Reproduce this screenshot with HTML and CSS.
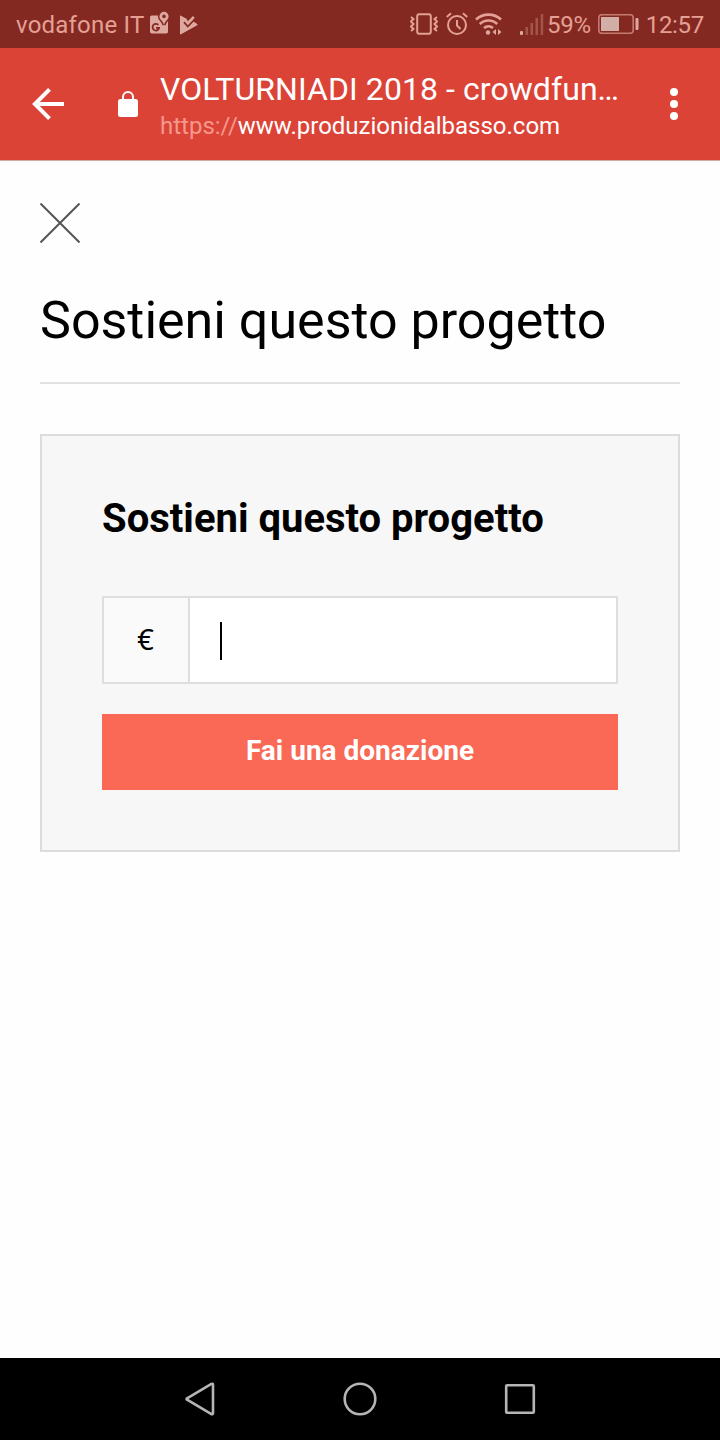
FILE: index.html
```html
<!DOCTYPE html>
<html lang="it">
<head>
  <meta charset="UTF-8">
  <meta name="viewport" content="width=device-width, initial-scale=1.0">
  <title>VOLTURNIADI 2018 - crowdfunding</title>
  <link rel="stylesheet" href="styles.css">
</head>
<body>
  <!-- Barra di stato -->
  <div class="status-bar">
    <div class="status-left">
      <span class="operator">vodafone IT</span>
      <svg class="icon-maps" width="20" height="24" viewBox="0 0 20 24">
        <rect class="fill" x="0" y="4.500" width="18" height="18" rx="1.800"/>
        <path class="pin" d="M14 .8a4.600 4.600 0 0 1 4.600 4.600c0 3.200-3.600 4.200-4.600 8.600-1-4.400-4.600-5.400-4.600-8.600A4.600 4.600 0 0 1 14 .8z"/>
        <circle class="hole" cx="14" cy="5.400" r="1.800"/>
        <path class="cut" d="M8.300 14a3.300 3.300 0 1 0 .8 2.800H6"/>
      </svg>
      <svg class="icon-play" width="20" height="20" viewBox="0 0 20 20">
        <path class="fill" d="M1.500.5L7.500 3.800l1.300 2.400L14 1l1.500 1.700-1.700 3.300 4.400 3q.8.600 0 1.200L2 19.300q-1 .4-1-.6V1q0-.8.500-.5z"/>
        <path class="cut" d="M5 7.200l3.800 4.300L15.500 4.500"/>
      </svg>
    </div>
    <div class="status-right">
      <svg class="icon-vibrate" width="28" height="22" viewBox="0 0 28 22">
        <rect class="line" x="7.200" y="1.200" width="13.600" height="19.600" rx="2"/>
        <path class="line" d="M1 4l2.500 2L1 8.500 3.500 11 1 13.500 3.500 16 1 18M27 4l-2.500 2L27 8.500 24.500 11l2.500 2.500-2.500 2.500 2.500 2"/>
      </svg>
      <svg class="icon-alarm" width="22" height="24" viewBox="0 0 22 24">
        <circle class="line" cx="11" cy="13" r="9"/>
        <path class="line" d="M11 8v5.500l3.500 3.500M.8 5L5 1.300M21.200 5L17 1.300"/>
      </svg>
      <svg class="icon-wifi" width="28" height="24" viewBox="0 0 28 24">
        <path class="line thick" d="M1 7.500a18.500 18.500 0 0 1 25 0M4.800 12a12.500 12.500 0 0 1 17.400 0M9 16a7 7 0 0 1 9 0"/>
        <circle class="fill" cx="13" cy="20.500" r="2.200"/>
        <path class="fill" d="M21 17v6l-3.500-3zM23 17l3.500 3-3.500 3z"/>
      </svg>
      <svg class="icon-signal" width="24" height="23" viewBox="0 0 24 23">
        <rect class="fill" x="0" y="18" width="3" height="4" rx="1"/>
        <path class="fill dim" d="M5.500 14h2.500v8H5.500zM10.500 10H13v12h-2.500zM15.500 5H18v17h-2.500zM20.700 1h2.500v21h-2.500z"/>
      </svg>
      <span class="battery-text">59%</span>
      <svg class="icon-battery" width="41" height="20" viewBox="0 0 41 20">
        <rect class="battery-frame" x=".8" y=".8" width="34.400" height="18.400" rx="3"/>
        <rect class="battery-level" x="3" y="3" width="18" height="14"/>
        <rect class="fill" x="37.500" y="4" width="3" height="12" rx="1"/>
      </svg>
      <span class="clock">12:57</span>
    </div>
  </div>

  <!-- Barra del browser -->
  <header class="toolbar">
    <svg class="icon-back" width="32" height="32" viewBox="0 0 32 32">
      <path d="M32 16H3M17.500 1.400L2.900 16l14.600 14.600"/>
    </svg>
    <svg class="icon-lock" width="20" height="27" viewBox="0 0 20 27">
      <rect x="0" y="8" width="20" height="18" rx="2.500"/>
      <path d="M5 9V6a5 5 0 0 1 10 0v3"/>
    </svg>
    <div class="page-info">
      <div class="page-title">VOLTURNIADI 2018 - crowdfun…</div>
      <div class="page-url"><span>https://</span>www.produzionidalbasso.com</div>
    </div>
    <svg class="icon-menu" width="8" height="32" viewBox="0 0 8 32">
      <circle cx="4" cy="4" r="4"/>
      <circle cx="4" cy="16" r="4"/>
      <circle cx="4" cy="28" r="4"/>
    </svg>
  </header>

  <!-- Contenuto -->
  <main class="content">
    <svg class="icon-close" width="40" height="40" viewBox="0 0 40 40">
      <path d="M.5.5l39 39M39.500.5l-39 39"/>
    </svg>
    <h1>Sostieni questo progetto</h1>
    <section class="box">
      <h2>Sostieni questo progetto</h2>
      <div class="amount">
        <span class="currency">€</span>
        <div class="field"><span class="caret"></span></div>
      </div>
      <button class="btn">Fai una donazione</button>
    </section>
  </main>

  <!-- Barra di navigazione -->
  <nav class="nav-bar">
    <svg width="34" height="34" viewBox="0 0 34 34">
      <path d="M28 2.200Q30 1 30 3v28q0 2-2 .8L4.500 18q-2-1 0-2z"/>
    </svg>
    <svg width="34" height="34" viewBox="0 0 34 34">
      <circle cx="17" cy="17" r="15.300"/>
    </svg>
    <svg width="34" height="34" viewBox="0 0 34 34">
      <rect x="3.200" y="3.200" width="27.600" height="27.600" rx="1"/>
    </svg>
  </nav>
</body>
</html>
```
FILE: styles.css
```css
* {
  margin: 0;
  padding: 0;
  box-sizing: border-box;
}
body {
  font-family: Roboto, sans-serif;
  background: #fefefe;
  color: #000;
  display: flex;
  flex-direction: column;
  height: 1440px;
}
svg {
  display: block;
  flex: none;
}

/* === BARRA DI STATO === */
.status-bar {
  display: flex;
  justify-content: space-between;
  height: 48px;
  padding: 0 16px;
  background: #842921;
  color: #e5a095;
  font-size: 24px;
  line-height: 46px;
  white-space: nowrap;
}
.status-left,
.status-right {
  display: flex;
  align-items: center;
  height: 48px;
}
.status-bar span {
  padding-top: 2px;
}
.operator {
  letter-spacing: 0.2px;
}
.battery-text,
.clock {
  letter-spacing: -0.3px;
}
.status-bar .fill {
  fill: #dda99e;
}
.status-bar .line {
  fill: none;
  stroke: #e5a095;
  stroke-width: 2;
}
.status-bar .thick {
  stroke-width: 2.6;
}
.status-bar .dim {
  opacity: 0.35;
}
.status-bar .cut {
  fill: none;
  stroke: #842921;
  stroke-width: 1.8;
}
.pin {
  fill: #dda99e;
  stroke: #842921;
  stroke-width: 3;
  paint-order: stroke;
}
.hole {
  fill: #842921;
}
.icon-maps {
  margin: 0 0 2px 6px;
}
.icon-play {
  margin: 1px 0 0 9px;
}
.icon-alarm {
  margin-left: 8px;
}
.icon-wifi {
  margin-left: 7px;
}
.icon-signal {
  margin: 0 3px 0 17px;
}
.icon-battery {
  margin: 0 7px 0 7px;
}
.battery-frame {
  fill: none;
  stroke: #c57b70;
  stroke-width: 1.6;
}
.battery-level {
  fill: #d1afa6;
}

/* === BARRA DEL BROWSER === */
.toolbar {
  display: flex;
  align-items: center;
  height: 113px;
  padding: 0 42px 0 32px;
  background: #dc4337;
  border-bottom: 1px solid #d5aaa3;
  color: #fff;
}
.icon-back path {
  fill: none;
  stroke: #fff;
  stroke-width: 4;
}
.icon-lock {
  margin: 0 22px 0 54px;
}
.icon-lock rect {
  fill: #fff;
}
.icon-lock path {
  fill: none;
  stroke: #fff;
  stroke-width: 2;
}
.page-info {
  flex: 1;
  padding-top: 4px;
  white-space: nowrap;
}
.page-title {
  font-size: 32px;
  letter-spacing: 0.07px;
  line-height: 40px;
}
.page-url {
  font-size: 24px;
  line-height: 34px;
}
.page-url span {
  color: #f5988c;
}
.icon-menu {
  fill: #fff;
}

/* === CONTENUTO === */
.content {
  flex: 1;
  padding: 42px 40px 0;
}
.icon-close path {
  stroke: #555;
  stroke-width: 2;
}
h1 {
  margin-top: 48px;
  padding-bottom: 31px;
  border-bottom: 2px solid #e1e1e1;
  font-size: 52px;
  font-weight: 400;
  line-height: 60px;
}
.box {
  margin-top: 50px;
  height: 418px;
  padding: 59px 60px 0;
  background: #f7f7f7;
  border: 2px solid #dcdcdc;
}
h2 {
  font-size: 40px;
  font-weight: 700;
  line-height: 48px;
}
.amount {
  display: flex;
  height: 88px;
  margin-top: 53px;
  background: #fff;
  border: 2px solid #dedede;
}
.currency {
  width: 86px;
  padding-right: 1px;
  background: #fafafa;
  border-right: 2px solid #dedede;
  font-family: "Noto Sans", sans-serif;
  font-size: 29px;
  line-height: 81px;
  text-align: center;
}
.field {
  display: flex;
  align-items: center;
  padding: 2px 0 0 30px;
}
.caret {
  width: 2px;
  height: 38px;
  background: #000;
}
.btn {
  display: block;
  width: 100%;
  height: 76px;
  margin-top: 30px;
  padding-bottom: 3px;
  background: #fa6956;
  border: none;
  color: #fff;
  font-family: inherit;
  font-size: 28px;
  font-weight: 700;
}

/* === BARRA DI NAVIGAZIONE === */
.nav-bar {
  display: flex;
  justify-content: center;
  align-items: center;
  gap: 126px;
  height: 82px;
  background: #000;
}
.nav-bar svg {
  fill: none;
  stroke: #b5b5b5;
  stroke-width: 2.6;
}
```
